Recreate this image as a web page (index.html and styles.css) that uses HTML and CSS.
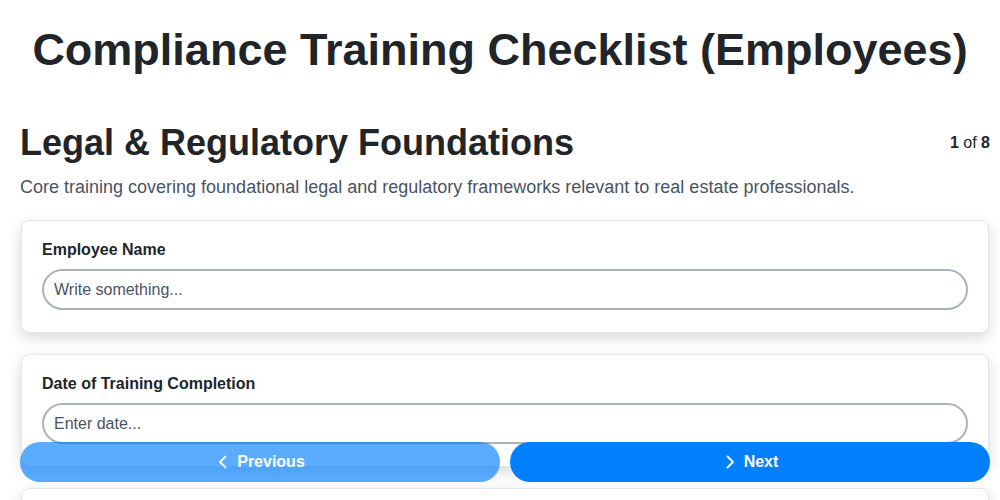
FILE: index.html
```html
<!DOCTYPE html>
<html lang="en">
<head>
<meta charset="utf-8">
<title>Compliance Training Checklist (Employees)</title>
<link rel="stylesheet" href="styles.css">
</head>
<body>
<header class="page-header">
  <h1 class="page-title">Compliance Training Checklist (Employees)</h1>
</header>
<main class="content">
  <div class="section-head">
    <h2 class="section-title">Legal &amp; Regulatory Foundations</h2>
    <div class="step-count"><b>1</b> of <b>8</b></div>
  </div>
  <p class="section-desc">Core training covering foundational legal and regulatory frameworks relevant to real estate professionals.</p>

  <div class="card">
    <label class="field-label" for="f1">Employee Name</label>
    <input class="field-input" id="f1" type="text" placeholder="Write something...">
  </div>
  <div class="card">
    <label class="field-label" for="f2">Date of Training Completion</label>
    <input class="field-input" id="f2" type="text" placeholder="Enter date...">
  </div>
  <div class="card">
    <label class="field-label" for="f3">Fair Housing Act Training</label>
    <input class="field-input" id="f3" type="text" placeholder="Write something...">
  </div>
</main>
<nav class="nav-bar">
  <button class="nav-btn nav-prev" type="button">
    <svg class="chev" viewBox="0 0 16 16" width="16" height="16"><path d="M10.5 2.5 5 8l5.5 5.5" fill="none" stroke="currentColor" stroke-width="1.8" stroke-linecap="round" stroke-linejoin="round"/></svg>
    <span>Previous</span>
  </button>
  <button class="nav-btn nav-next" type="button">
    <svg class="chev" viewBox="0 0 16 16" width="16" height="16"><path d="M5.5 2.5 11 8l-5.5 5.5" fill="none" stroke="currentColor" stroke-width="1.8" stroke-linecap="round" stroke-linejoin="round"/></svg>
    <span>Next</span>
  </button>
</nav>
</body>
</html>
```
FILE: styles.css
```css
* { box-sizing: border-box; }
html, body { margin: 0; padding: 0; }
body {
  font-family: "Liberation Sans", Arial, sans-serif;
  color: #212529;
  background: #fff;
  overflow: hidden;
  height: 500px;
}
.page-header {
  padding-top: 24px;
  text-align: center;
}
.page-title {
  margin: 0;
  font-size: 45px;
  line-height: 52px;
  font-weight: 700;
  color: #212529;
}
.content {
  padding: 0 10px 0 20px;
  margin-top: 46px;
}
.section-head {
  display: flex;
  justify-content: space-between;
  align-items: center;
}
.section-title {
  margin: 0;
  font-size: 36px;
  line-height: 42px;
  font-weight: 700;
}
.step-count {
  font-size: 16px;
  color: #212529;
}
.section-desc {
  margin: 11px 0 21px;
  font-size: 18px;
  line-height: 24px;
  color: #495365;
}
.card {
  background: #fff;
  border: 1px solid #e6e6ea;
  border-radius: 8px;
  padding: 20px 20px 22px;
  margin: 0 1px 21px;
  box-shadow: 0 5px 14px rgba(20, 20, 50, 0.16);
}
.field-label {
  display: block;
  font-size: 16px;
  line-height: 18px;
  font-weight: 700;
  color: #212529;
  margin-bottom: 10px;
}
.field-input {
  display: block;
  width: 100%;
  height: 41px;
  border: 2px solid #a9b2bb;
  border-radius: 21px;
  padding: 0 10px;
  font-family: "Liberation Sans", Arial, sans-serif;
  font-size: 16px;
  color: #212529;
  background: #fff;
  outline: none;
}
.field-input::placeholder { color: #4b5363; opacity: 1; }
.nav-bar {
  position: fixed;
  left: 20px;
  right: 10px;
  bottom: 18px;
  display: flex;
  gap: 10px;
}
.nav-btn {
  flex: 1;
  height: 40px;
  border: none;
  border-radius: 20px;
  background: #0080ff;
  color: #fff;
  font-family: "Liberation Sans", Arial, sans-serif;
  font-size: 16px;
  font-weight: 700;
  display: flex;
  align-items: center;
  justify-content: center;
  gap: 6px;
}
.nav-prev { opacity: 0.65; }
.chev { display: block; }
```
